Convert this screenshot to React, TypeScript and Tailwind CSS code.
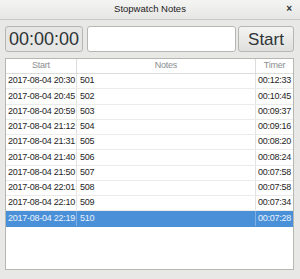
const rows = [
  ['2017-08-04 20:30', '501', '00:12:33'],
  ['2017-08-04 20:45', '502', '00:10:45'],
  ['2017-08-04 20:59', '503', '00:09:37'],
  ['2017-08-04 21:12', '504', '00:09:16'],
  ['2017-08-04 21:31', '505', '00:08:20'],
  ['2017-08-04 21:40', '506', '00:08:24'],
  ['2017-08-04 21:50', '507', '00:07:58'],
  ['2017-08-04 22:01', '508', '00:07:58'],
  ['2017-08-04 22:10', '509', '00:07:34'],
  ['2017-08-04 22:19', '510', '00:07:28'],
];

export default function App() {
  return (
    <div className="w-[300px] h-[279px] flex flex-col bg-[#e8e8e7] font-['Liberation_Sans',sans-serif] text-[#2e3436] overflow-hidden">
      {/* title bar */}
      <div className="relative h-[20px] shrink-0 flex items-center justify-center bg-gradient-to-b from-[#f4f4f3] to-[#e6e6e5] border-b border-[#c8c8c6]">
        <span className="text-[9.5px] font-medium text-[#222]">Stopwatch Notes</span>
        <span className="absolute right-[8px] top-[4px] text-[10px] font-bold leading-none text-[#2e3436]">×</span>
      </div>

      {/* toolbar */}
      <div className="flex items-center pl-[5px] pr-[6px] pt-[6px]">
        <div className="w-[78px] h-[26px] flex items-center justify-center rounded-[3px] border border-[#b6b6b3] bg-[#e6e6e5] text-[18px] leading-none">
          00:00:00
        </div>
        <div className="ml-[4px] flex-1 h-[26px] rounded-[3px] border border-[#b6b6b3] bg-white"></div>
        <div className="ml-[2px] w-[56px] h-[26px] flex items-center justify-center rounded-[3px] border border-[#b6b6b3] bg-gradient-to-b from-[#f4f4f3] to-[#dfdfde] text-[17px] leading-none">
          Start
        </div>
      </div>

      {/* table */}
      <div className="mt-[6px] ml-[5px] mr-[6px] h-[212px] border border-[#b6b6b3] bg-white text-[9px] tracking-[-0.25px] whitespace-nowrap">
        <div className="flex h-[15px] border-b border-[#dcdcdb] text-[#8b8e8f]">
          <div className="w-[71px] flex items-center justify-center border-r border-[#dcdcdb]">Start</div>
          <div className="flex-1 flex items-center justify-center border-r border-[#dcdcdb]">Notes</div>
          <div className="w-[37px] flex items-center justify-center">Timer</div>
        </div>
        {rows.map((r, i) => {
          const sel = i === rows.length - 1;
          return (
            <div
              key={r[1]}
              className={
                sel
                  ? 'flex h-[15.25px] border-b border-[#4a90d9] bg-[#4a90d9] text-[#e8f0fa]'
                  : 'flex h-[15.25px] border-b border-[#ebebea] text-[#1e1e1e]'
              }
            >
              <div className={sel ? 'w-[71px] pl-[2px] flex items-center overflow-hidden border-r border-[#7fb0e5]' : 'w-[71px] pl-[2px] flex items-center overflow-hidden border-r border-[#e3e3e2]'}>
                {r[0]}
              </div>
              <div className={sel ? 'flex-1 pl-[3px] flex items-center border-r border-[#7fb0e5]' : 'flex-1 pl-[3px] flex items-center border-r border-[#e3e3e2]'}>
                {r[1]}
              </div>
              <div className="w-[37px] pl-[2px] flex items-center overflow-hidden">{r[2]}</div>
            </div>
          );
        })}
      </div>
    </div>
  );
}
